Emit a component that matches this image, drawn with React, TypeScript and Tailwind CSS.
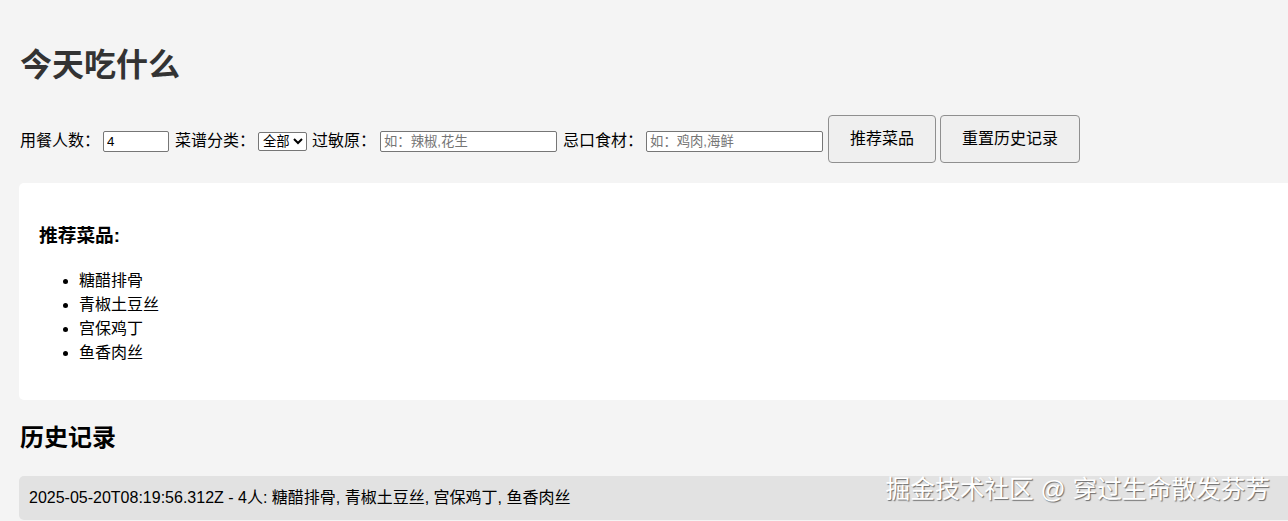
import React from "react";

const font = "font-['Liberation_Sans','Noto_Sans_CJK_SC',sans-serif]";

const dishes = ["糖醋排骨", "青椒土豆丝", "宫保鸡丁", "鱼香肉丝"];

const inputClassName =
  "mt-[4px] h-[21px] rounded-[2px] border border-[#767676] bg-white px-[3px] text-[13.33px] leading-none text-black outline-none placeholder:text-[#757575]";

const labelClassName = "mt-[4px]";

const buttonClassName =
  "h-[48px] rounded-[4px] border border-[#8f8f8f] bg-[#efefef] text-[16px] text-black";

export default function App() {
  return (
    <div
      className={`relative min-h-[521px] overflow-hidden bg-[#f4f4f4] p-[20px] text-[16px] leading-[1.5] text-black ${font}`}
    >
      <h1 className="mt-[21px] mb-[26px] text-[32px] font-bold leading-[48px] text-[#333]">
        今天吃什么
      </h1>

      <form className="mb-[20px] flex items-center">
        <label className={labelClassName}>用餐人数：</label>
        <input
          type="text"
          defaultValue="4"
          className={`${inputClassName} ml-[3px] w-[66px]`}
        />
        <label className={`${labelClassName} ml-[6px]`}>菜谱分类：</label>
        <select className="mt-[4px] ml-[3px] h-[19px] w-[49px] rounded-[2px] border border-[#767676] bg-white text-[13.33px] leading-none text-black">
          <option>全部</option>
        </select>
        <label className={`${labelClassName} ml-[5px]`}>过敏原：</label>
        <input
          type="text"
          placeholder="如：辣椒,花生"
          className={`${inputClassName} ml-[4px] w-[177px]`}
        />
        <label className={`${labelClassName} ml-[6px]`}>忌口食材：</label>
        <input
          type="text"
          placeholder="如：鸡肉,海鲜"
          className={`${inputClassName} ml-[3px] w-[177px]`}
        />
        <button type="button" className={`${buttonClassName} ml-[5px] w-[108px]`}>
          推荐菜品
        </button>
        <button type="button" className={`${buttonClassName} ml-[4px] w-[140px]`}>
          重置历史记录
        </button>
      </form>

      <div className="-ml-px w-[calc(100%+40px)] rounded-[5px] bg-white p-[20px] pb-[19px]">
        <h3 className="mt-[19px] mb-[19px] text-[18.72px] font-bold leading-[28px]">
          推荐菜品:
        </h3>
        <ul className="mb-[16px] list-disc pl-[40px]">
          {dishes.map((dish) => (
            <li key={dish}>{dish}</li>
          ))}
        </ul>
      </div>

      <h2 className="mt-[20px] mb-[20px] text-[24px] font-bold leading-[36px]">
        历史记录
      </h2>
      <ul>
        <li className="-ml-px w-[calc(100%+40px)] rounded-[5px] bg-[#e2e2e2] p-[10px]">
          2025-05-20T08:19:56.312Z - 4人: 糖醋排骨, 青椒土豆丝, 宫保鸡丁, 鱼香肉丝
        </li>
      </ul>

      <div className="pointer-events-none absolute right-[18px] top-[472px] text-[24.7px] leading-[36px] text-white [text-shadow:1px_1px_1px_#6b6b6b]">
        掘金技术社区 @ 穿过生命散发芬芳
      </div>
    </div>
  );
}
